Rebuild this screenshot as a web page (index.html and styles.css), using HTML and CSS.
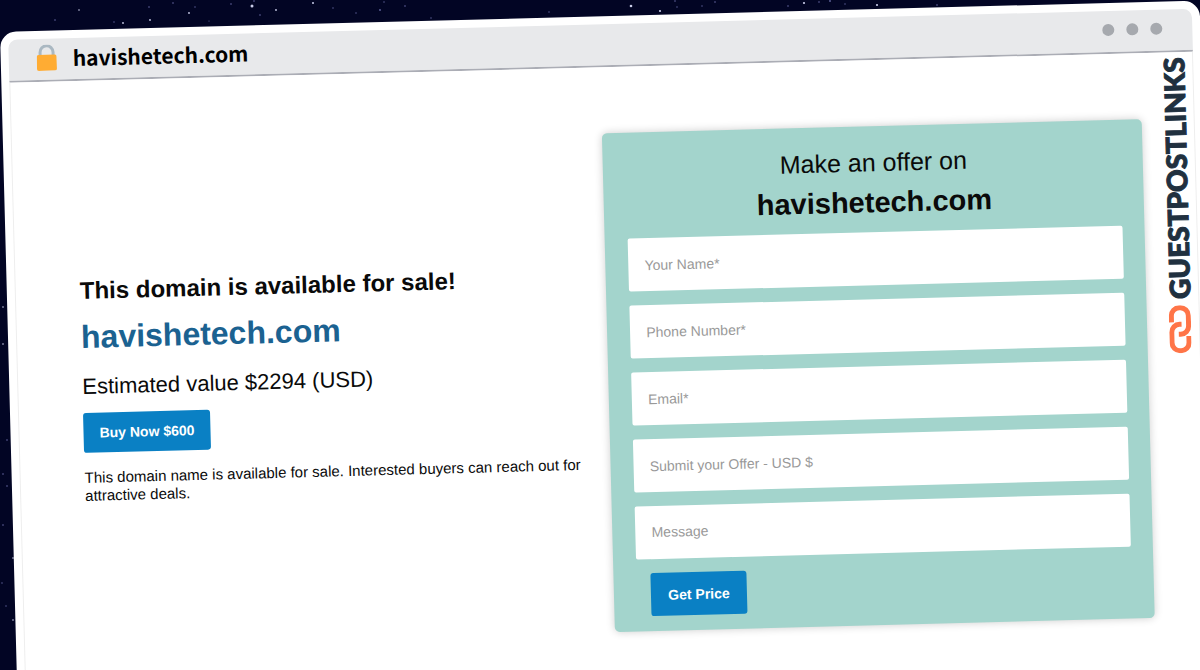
FILE: index.html
```html
<!DOCTYPE html>
<html lang="en">
<head>
    <meta charset="UTF-8">
    <meta name="viewport" content="width=device-width, initial-scale=1.0">
    <title>havishetech.com is for sale</title>
    <link rel="stylesheet" href="styles.css">
</head>
<body>
    <svg class="stars" width="1200" height="670" viewBox="0 0 1200 670" aria-hidden="true">
        <g fill="#c9cce8">
            <circle cx="252" cy="6" r="1.5"/>
            <circle cx="79" cy="10" r="0.8"/>
            <circle cx="189" cy="13" r="0.9"/>
            <circle cx="276" cy="10" r="0.9"/>
            <circle cx="150" cy="20" r="0.9"/>
            <circle cx="123" cy="23" r="0.9"/>
            <circle cx="631" cy="6" r="1.3"/>
            <circle cx="660" cy="11" r="1.1"/>
            <circle cx="804" cy="3" r="1.1"/>
            <circle cx="877" cy="5" r="1.1"/>
            <circle cx="313" cy="3" r="1"/>
            <circle cx="3" cy="307" r="0.8"/>
            <circle cx="3" cy="344" r="0.8"/>
            <circle cx="13" cy="558" r="0.8"/>
            <circle cx="13" cy="620" r="0.8"/>
        </g>
        <g fill="#6468a0">
            <circle cx="173" cy="3" r="0.8"/>
            <circle cx="149" cy="7" r="0.8"/>
            <circle cx="195" cy="7" r="0.7"/>
            <circle cx="231" cy="4" r="0.8"/>
            <circle cx="260" cy="15" r="0.8"/>
            <circle cx="209" cy="21" r="0.6"/>
            <circle cx="55" cy="20" r="0.8"/>
            <circle cx="114" cy="22" r="0.7"/>
            <circle cx="254" cy="1" r="0.8"/>
            <circle cx="333" cy="8" r="0.7"/>
            <circle cx="356" cy="13" r="0.7"/>
            <circle cx="380" cy="10" r="0.9"/>
            <circle cx="384" cy="2" r="0.7"/>
            <circle cx="405" cy="6" r="0.8"/>
            <circle cx="431" cy="18" r="0.7"/>
            <circle cx="549" cy="12" r="0.7"/>
            <circle cx="675" cy="1" r="0.8"/>
            <circle cx="677" cy="7" r="0.7"/>
            <circle cx="702" cy="6" r="0.7"/>
            <circle cx="715" cy="2" r="0.8"/>
            <circle cx="788" cy="6" r="0.8"/>
            <circle cx="819" cy="2" r="0.8"/>
            <circle cx="830" cy="1" r="0.9"/>
            <circle cx="845" cy="4" r="0.7"/>
            <circle cx="937" cy="5" r="0.8"/>
            <circle cx="7" cy="440" r="0.8"/>
            <circle cx="3" cy="474" r="0.8"/>
            <circle cx="7" cy="486" r="0.8"/>
            <circle cx="3" cy="525" r="0.8"/>
            <circle cx="2" cy="583" r="0.7"/>
            <circle cx="6" cy="606" r="0.7"/>
        </g>
    </svg>

    <div class="browser">
        <header class="address-bar">
            <svg class="lock" width="20" height="26" viewBox="0 0 20 26" aria-hidden="true">
                <path d="M3.500 12V7.500a6.500 6.500 0 0 1 13 0V12" fill="none" stroke="#aab8c2" stroke-width="3"/>
                <rect x="0" y="10" width="20" height="16" rx="2" fill="#ffac33"/>
            </svg>
            <span class="address">havishetech.com</span>
            <div class="dots">
                <span class="dot"></span>
                <span class="dot"></span>
                <span class="dot"></span>
            </div>
        </header>

        <main class="page">
            <section class="domain-info">
                <h1>This domain is available for sale!</h1>
                <h2>havishetech.com</h2>
                <p class="estimate">Estimated value $2294 (USD)</p>
                <button type="button" class="btn">Buy Now $600</button>
                <p class="description">This domain name is available for sale. Interested buyers can reach out for attractive deals.</p>
            </section>

            <form class="offer-form">
                <h2>Make an offer on <strong>havishetech.com</strong></h2>
                <input type="text" name="name" placeholder="Your Name*" aria-label="Your Name" required>
                <input type="tel" name="phone" placeholder="Phone Number*" aria-label="Phone Number" required>
                <input type="email" name="email" placeholder="Email*" aria-label="Email" required>
                <input type="text" name="offer" placeholder="Submit your Offer - USD $" aria-label="Submit your Offer - USD $">
                <textarea name="message" rows="1" placeholder="Message" aria-label="Message"></textarea>
                <button type="submit" class="btn btn-price">Get Price</button>
            </form>

            <aside class="brand">
                <span class="brand-name">GUESTPOSTLINKS</span>
                <svg width="22" height="48" viewBox="0 0 22 48" aria-hidden="true">
                    <g fill="none" stroke="#ff7548" stroke-width="5">
                        <path d="M2.500 17V10.500a8 8 0 0 1 8-8h1a8 8 0 0 1 8 8V21a8 8 0 0 1-8 8H9.500"/>
                        <path d="M19.500 31v6.500a8 8 0 0 1-8 8h-1a8 8 0 0 1-8-8V27a8 8 0 0 1 8-8h2"/>
                    </g>
                </svg>
            </aside>
        </main>
    </div>
</body>
</html>
```

FILE: styles.css
```css
* {
    box-sizing: border-box;
}

body {
    margin: 0;
    height: 100vh;
    overflow: hidden;
    background-color: #020524;
    font-family: "Liberation Sans", Arial, sans-serif;
    color: #0a0a0a;
}

h1,
h2,
p {
    margin: 0;
}

.stars {
    position: absolute;
    top: 0;
    left: 0;
}

/* browser window, tilted */
.browser {
    position: relative;
    min-height: 100vh;
    margin-top: 32px;
    padding: 8px 8px 0;
    background-color: #fff;
    border-radius: 16px 16px 0 0;
    transform: rotate(-1.5deg);
    transform-origin: 0 0;
}

.address-bar {
    display: flex;
    align-items: center;
    height: 43px;
    padding: 0 30px 3px 28px;
    background-color: #e8e9eb;
    border-bottom: 2px solid #abadb5;
    border-radius: 9px 9px 0 0;
}

.address {
    margin-left: 16px;
    font-family: "Noto Sans CJK JP", sans-serif;
    font-size: 21px;
    font-weight: bold;
    line-height: 32px;
    color: #000;
}

.dots {
    display: flex;
    gap: 12px;
    margin-left: auto;
}

.dot {
    width: 12px;
    height: 12px;
    border-radius: 50%;
    background-color: #a6a9ae;
}

.page {
    display: grid;
    grid-template-columns: 39fr 40fr 52px;
    align-items: start;
    min-height: 100vh;
    padding-left: 64px;
    border: 1px solid #eee;
    border-width: 0 1px;
}

.domain-info {
    padding: 194px 16px 0 0;
}

.domain-info h1 {
    font-size: 24px;
    line-height: 32px;
}

.domain-info h2 {
    margin-top: 10px;
    font-size: 32px;
    line-height: 40px;
    color: #1b6291;
}

.estimate {
    margin-top: 16px;
    font-size: 22px;
    line-height: 28px;
}

.description {
    margin-top: 16px;
    font-size: 15px;
    line-height: 18px;
}

.btn {
    height: 40px;
    margin-top: 12px;
    padding: 0 16px;
    background-color: #0a80c4;
    color: #fff;
    border: none;
    border-radius: 3px;
    font-family: inherit;
    font-size: 14px;
    font-weight: bold;
    cursor: pointer;
}

.btn:hover {
    background-color: #086ba5;
}

.offer-form {
    margin-top: 66px;
    padding: 16px 22px 15px 23px;
    background-color: #a3d4cc;
    border-radius: 5px;
    box-shadow: 0 0 8px rgba(0, 0, 0, 0.2);
}

.offer-form h2 {
    margin-bottom: 10px;
    font-size: 25px;
    font-weight: normal;
    line-height: 40px;
    text-align: center;
}

.offer-form strong {
    display: block;
    font-size: 29px;
}

.offer-form input,
.offer-form textarea {
    display: block;
    width: 100%;
    height: 53px;
    margin-bottom: 14px;
    padding: 16px;
    background-color: #fff;
    border: none;
    border-radius: 2px;
    font-family: inherit;
    font-size: 14px;
    line-height: 20px;
    resize: none;
}

.offer-form ::placeholder {
    color: #999;
}

.btn-price {
    display: block;
    height: 43px;
    margin: 0 0 0 14px;
    padding: 0 17px;
}

.brand {
    display: flex;
    flex-direction: column;
    align-items: center;
    gap: 6px;
    padding: 5px 0 0 14px;
}

.brand-name {
    writing-mode: vertical-rl;
    transform: rotate(180deg);
    font-family: Lato, sans-serif;
    font-size: 28px;
    font-weight: 900;
    line-height: 32px;
    color: #20303f;
    -webkit-text-stroke: 1px #20303f;
}
```
